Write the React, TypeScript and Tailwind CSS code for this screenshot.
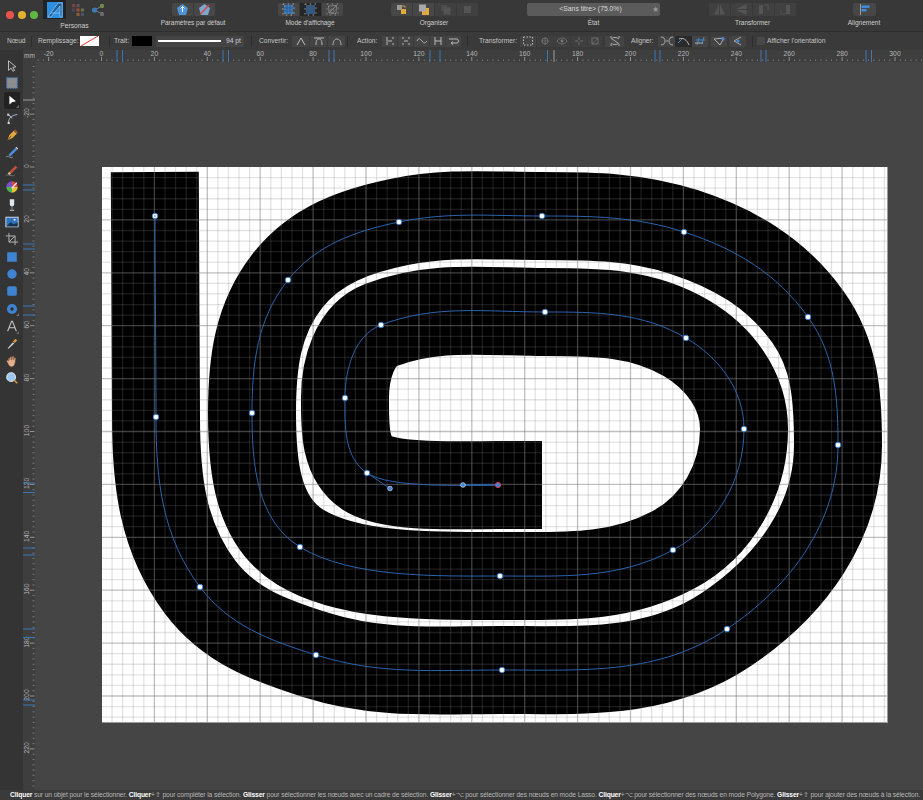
import React from "react";

const font = { fontFamily: '"Liberation Sans", Arial, sans-serif' };

// x, y and the direction of travel at each node of the spiral
const nodes = [
  [155, 216, 0, 1], [156, 417, 0, 1], [200, 587, 0.6, 0.8], [316, 655, 0.95, 0.3], [502, 670, 1, 0],
  [727, 629, 0.83, -0.56], [838, 445, 0, -1], [808, 317, -0.58, -0.81], [684, 232, -0.93, -0.3],
  [542, 216, -1, 0], [399, 222, -0.97, 0.2], [288, 280, -0.62, 0.78], [252, 413, 0, 1],
  [300, 547, 0.85, 0.52], [500, 576, 1, 0], [673, 550, 0.88, -0.47], [744, 429, 0, -1],
  [686, 338, -0.85, -0.5], [545, 312, -1, 0], [381, 325, -0.9, 0.35], [345, 398, 0, 1], [367, 473, 0.83, 0.56],
];

function buildCurve() {
  let d = `M${nodes[0][0]},${nodes[0][1]}`;
  for (let i = 0; i < nodes.length - 1; i++) {
    const [x0, y0, tx0, ty0] = nodes[i];
    const [x1, y1, tx1, ty1] = nodes[i + 1];
    const k = Math.hypot(x1 - x0, y1 - y0) * (i === 13 ? 0.3 : 0.36);
    d += ` C${x0 + tx0 * k},${y0 + ty0 * k} ${x1 - tx1 * k},${y1 - ty1 * k} ${x1},${y1}`;
  }
  return d + " C390,488.5 463,485 498,485";
}

const curve = buildCurve();

const PX_20MM = 52.9;
const ORIGIN_X = 101.5;
const ORIGIN_Y = 167;

function range(from: number, to: number) {
  const out: number[] = [];
  for (let i = from; i <= to; i++) out.push(i);
  return out;
}

function Canvas() {
  const step = PX_20MM / 5;
  return (
    <svg viewBox="35 62 888 728" className="block w-[888px] h-[728px]">
      <rect x="102" y="167" width="786" height="556" fill="#9a9a9a" />
      <rect x="102" y="167" width="785" height="555" fill="#ffffff" />
      <path d={curve} fill="none" stroke="#000" strokeWidth="88" strokeLinecap="square" strokeLinejoin="round" />
      {range(1, 74).map((i) => (
        <line key={i} x1={ORIGIN_X + i * step} x2={ORIGIN_X + i * step} y1="167" y2="722"
          stroke="#808080" strokeOpacity={i % 5 === 0 ? 0.5 : 0.22} strokeWidth="1.3" />
      ))}
      {range(1, 52).map((i) => (
        <line key={i} y1={ORIGIN_Y + i * step} y2={ORIGIN_Y + i * step} x1="102" x2="887"
          stroke="#808080" strokeOpacity={i % 5 === 0 ? 0.5 : 0.22} strokeWidth="1.3" />
      ))}
      <path d={curve} fill="none" stroke="#2c64ad" strokeWidth="1" />
      <path d="M367,473 L390,488.5" fill="none" stroke="#2c64ad" strokeWidth="1" />
      <path d="M463,485 L498,485" fill="none" stroke="#2c64ad" strokeWidth="1.4" />
      {nodes.map(([x, y], i) => (
        <g key={i}>
          <circle cx={x} cy={y} r="2.8" fill="#fff" stroke="#2f74c8" strokeWidth="0.9" />
          {i === 0 && <circle cx={x} cy={y} r="0.8" fill="#2f74c8" />}
        </g>
      ))}
      <circle cx="390" cy="488.5" r="2.3" fill="#3d82d8" stroke="#c8d4e0" strokeWidth="0.8" />
      <circle cx="463" cy="485" r="2.3" fill="#3d82d8" stroke="#c8d4e0" strokeWidth="0.8" />
      <circle cx="498" cy="485" r="2.6" fill="#3d82d8" stroke="#e0384c" strokeWidth="1" />
    </svg>
  );
}

function TopRuler() {
  const marks = [117, 122.5, 223, 228.5, 329, 334, 430, 440, 547.5, 655, 660, 761, 766, 866, 871.5];
  return (
    <svg viewBox="35 50 888 12" className="block w-[888px] h-[12px]" style={font}>
      {range(-25, 155).map((i) => {
        const x = ORIGIN_X + (i * PX_20MM) / 10;
        return <line key={i} x1={x} x2={x} y1={i % 10 === 0 ? 57 : 59.5} y2="61" stroke="#a8a8a8" strokeWidth="0.8" strokeOpacity={i % 10 === 0 ? 1 : 0.7} />;
      })}
      {range(-1, 15).map((i) => (
        <text key={i} x={ORIGIN_X + i * PX_20MM} y="56" fontSize="6.8" fill="#b4b4b4" textAnchor="middle">{i * 20}</text>
      ))}
      {marks.map((x) => (
        <line key={x} x1={x} x2={x} y1="50" y2="62" stroke="#3b77b4" strokeWidth="1" />
      ))}
      <line x1="554" x2="554" y1="50" y2="62" stroke="#9a9a9a" strokeWidth="1" />
    </svg>
  );
}

function LeftRuler() {
  const marks = [185, 190, 244, 249, 306, 315, 483, 492.5, 548, 555, 629, 637.5, 700, 705];
  return (
    <svg viewBox="23 62 12 728" className="block w-[12px] h-[728px]" style={font}>
      {range(-20, 120).map((i) => {
        const y = ORIGIN_Y + (i * PX_20MM) / 10;
        if (y < 64) return null;
        return <line key={i} y1={y} y2={y} x1={i % 10 === 0 ? 30 : 32.5} x2="34.5" stroke="#a8a8a8" strokeWidth="0.8" strokeOpacity={i % 10 === 0 ? 1 : 0.7} />;
      })}
      {range(-1, 11).map((i) => {
        const y = ORIGIN_Y + i * PX_20MM - 1;
        return (
          <text key={i} transform={`translate(29 ${y}) rotate(-90)`} fontSize="6.8" fill="#b4b4b4" textAnchor="middle">{i * 20}</text>
        );
      })}
      {marks.map((y) => (
        <line key={y} y1={y} y2={y} x1="23" x2="35" stroke="#3b77b4" strokeWidth="1" />
      ))}
      <line y1="100" y2="100" x1="23" x2="35" stroke="#9a9a9a" strokeWidth="1" />
    </svg>
  );
}

function Ic({ w = 16, h = 16, size, children, dim }: { w?: number; h?: number; size?: number; children: React.ReactNode; dim?: boolean }) {
  return (
    <svg viewBox={`0 0 ${w} ${h}`} width={size ?? w} height={size ?? h} className={dim ? "block opacity-40" : "block"}>
      {children}
    </svg>
  );
}

const toolIcons: React.ReactNode[] = [
  <path d="M4 2 L4 13 L7 10.5 L9 14 L11 13 L9 9.5 L12.5 9 Z" fill="#3b3b3b" stroke="#c8c8c8" strokeWidth="1" />,
  <g>
    <rect x="2" y="2" width="12" height="12" fill="#8d8d8d" />
    <rect x="2" y="2" width="12" height="12" fill="none" stroke="#3f7fc4" strokeWidth="1.4" strokeDasharray="1.6 1.2" />
  </g>,
  <path d="M5 3 L5 13 L8 10.5 L12.5 9.5 Z" fill="#fff" />,
  <g fill="none" strokeWidth="1.1">
    <path d="M4 14 C4 8 7 5 14 4" stroke="#9fc0e2" />
    <rect x="3" y="12.5" width="2.4" height="2.4" fill="#d8d8d8" stroke="none" />
    <rect x="2.5" y="3" width="2.4" height="2.4" fill="#cfcfcf" stroke="none" />
    <path d="M4 4 L8 8.5" stroke="#cfcfcf" />
  </g>,
  <g>
    <path d="M3 14 L5 8 L10 3 L13.5 6.5 L8.5 11.5 Z" fill="#e3a73b" />
    <path d="M10 3 L11.5 1.5 L15 5 L13.5 6.5 Z" fill="#8a5a3c" />
    <path d="M3 14 L7 9" stroke="#5a3d12" strokeWidth="0.9" />
  </g>,
  <g>
    <path d="M4 11 L12 3 L14 5 L6 13 Z" fill="#4a8fe0" />
    <path d="M12 3 L13 2 L15 4 L14 5 Z" fill="#d9d9d9" />
    <path d="M1 14 C4 11 6 16 9 14" stroke="#9a9a9a" fill="none" strokeWidth="1" />
  </g>,
  <g>
    <path d="M5 10 L12 3 L14 5 L7 12 Z" fill="#c8503c" />
    <path d="M3 12 L5 10 L7 12 L5 14 Z" fill="#d9b58a" />
    <path d="M1 14.5 C4 12 7 16 11 14" stroke="#777" fill="none" strokeWidth="1" />
  </g>,
  <g>
    <path d="M8 1.5 A6.5 6.5 0 0 1 14.5 8 L8 8 Z" fill="#e0483c" />
    <path d="M14.5 8 A6.5 6.5 0 0 1 8 14.5 L8 8 Z" fill="#e6c23c" />
    <path d="M8 14.5 A6.5 6.5 0 0 1 1.5 8 L8 8 Z" fill="#4bb04f" />
    <path d="M1.5 8 A6.5 6.5 0 0 1 8 1.5 L8 8 Z" fill="#7a50d0" />
    <path d="M7 9 L13 2.5 L14 3.5 L8.5 10 Z" fill="#eee" />
  </g>,
  <g>
    <path d="M5.5 1.5 L10.5 1.5 L10.5 7 C10.5 9 9 9.5 8 9.5 C7 9.5 5.5 9 5.5 7 Z" fill="#dfe6ee" />
    <rect x="7.5" y="9" width="1" height="4.5" fill="#9a9a9a" />
    <rect x="5.5" y="13.5" width="5" height="1.2" fill="#bbb" />
  </g>,
  <g>
    <rect x="0.5" y="2" width="15" height="12" fill="#e0e6ee" />
    <rect x="1.5" y="3" width="13" height="10" fill="#2e73bd" />
    <path d="M1.5 13 L6.5 8 L9.5 10.5 L14.5 8.5 L14.5 13 Z" fill="#18324f" />
    <circle cx="11" cy="5.5" r="1.2" fill="#e8eef4" />
  </g>,
  <g fill="none" stroke="#b5b5b5" strokeWidth="1.1">
    <path d="M4.5 1 L4.5 11.5 L15 11.5" />
    <path d="M1 4.5 L11.5 4.5 L11.5 15" />
    <path d="M4.5 11.5 L11.5 4.5" />
  </g>,
  <rect x="2.5" y="2.5" width="11" height="11" fill="#3f84d2" rx="0.5" />,
  <circle cx="8" cy="8" r="5.4" fill="#3f84d2" />,
  <rect x="2.5" y="2.5" width="11" height="11" fill="#3f84d2" rx="2.2" />,
  <g>
    <circle cx="8" cy="8" r="5.8" fill="#3f84d2" />
    <circle cx="8" cy="8" r="1.9" fill="#2a2a2a" />
  </g>,
  <path d="M3 14 L7.5 2.5 L8.5 2.5 L13 14 M5 10 L11 10" fill="none" stroke="#c6c6c6" strokeWidth="1.2" />,
  <g>
    <path d="M3 14 L9 7 L10.5 8.5 L4 14.5 Z" fill="#cfd6dc" />
    <path d="M9 6 L12 3 L14 5 L11 8 Z" fill="#d89a34" />
  </g>,
  <path d="M4 8 L4 4.5 L5.5 4.5 L5.5 7 L6 3 L7.5 3 L7.7 7 L8.5 2.5 L10 2.5 L9.8 7 L11 4 L12.3 4.5 L11.5 10 C11 13 9.5 14.5 7.5 14.5 C5.5 14.5 4.5 13 3.5 11 L1.8 8 L3 7.2 Z" fill="#e3b08e" stroke="#6a4028" strokeWidth="0.4" />,
  <g>
    <circle cx="7" cy="7" r="5" fill="#9fc7ee" stroke="#dbe6f0" strokeWidth="1.2" />
    <path d="M10.5 10.5 L14 14" stroke="#d89a34" strokeWidth="1.8" />
  </g>,
];

function ToolColumn() {
  return (
    <div className="w-[23px] shrink-0 bg-[#343434] flex flex-col items-center pt-[7px]">
      {toolIcons.map((ic, i) => (
        <div
          key={i}
          className={`relative w-[16px] h-[17.36px] flex items-center justify-center rounded-[2px] ${i === 2 ? "bg-[#222222]" : ""}`}
        >
          <Ic size={14}>{ic}</Ic>
          {[2, 14, 15].includes(i) && (
            <span className="absolute right-px bottom-px w-0 h-0 border-l-[3px] border-b-[3px] border-l-transparent border-b-[#6a6a6a]" />
          )}
        </div>
      ))}
    </div>
  );
}

function TopBtn({ children, active, dim, w = "w-[21px]" }: { children: React.ReactNode; active?: boolean; dim?: boolean; w?: string }) {
  return (
    <div className={`${w} h-[13px] flex items-center justify-center ${active ? "bg-[#262626]" : "bg-[#474747]"} ${dim ? "opacity-60" : ""}`}>
      {children}
    </div>
  );
}

function Group({ className, label, children }: { className: string; label: string; children: React.ReactNode }) {
  return (
    <div className={`${className} flex flex-col items-center pt-[3px]`}>
      <div className="flex gap-px rounded-[2px] overflow-hidden">{children}</div>
      <div className="text-[6.5px] leading-[10px] mt-[2px] text-[#cfcfcf] whitespace-nowrap">{label}</div>
    </div>
  );
}

function TopBar() {
  return (
    <div className="h-[32px] flex bg-[#383838] border-b border-[#2e2e2e] shrink-0" style={font}>
      <div className="w-[43px] flex gap-[4px] pl-[6px] pt-[10.5px] shrink-0">
        <span className="size-[8px] rounded-full bg-[#e8544d]" />
        <span className="size-[8px] rounded-full bg-[#e0b22f]" />
        <span className="size-[8px] rounded-full bg-[#5fb843]" />
      </div>
      <div className="w-[63px] shrink-0 flex flex-col">
        <div className="flex items-start h-[21px]">
          <div className="w-[23px] h-[19px] bg-[#232323] flex items-center justify-center">
            <Ic w={18} h={18}>
              <path d="M1 1 L17 1 L17 17 L1 17 Z" fill="#2e8fe0" />
              <path d="M2 16 L12 2 L16 2 L16 16 L14 16 L14 5 L5 16 Z M5 12 L14 12" fill="#1b5f9f" stroke="#a8d6f8" strokeWidth="0.6" />
            </Ic>
          </div>
          <div className="w-[23px] h-[19px] flex items-center justify-center">
            <Ic w={14} h={14}>
              <g opacity="0.75">
                <rect x="1" y="1" width="3.2" height="3.2" fill="#8c4a44" />
                <rect x="5.4" y="1" width="3.2" height="3.2" fill="#6d5a66" />
                <rect x="5.4" y="5.4" width="3.2" height="3.2" fill="#b0583a" />
                <rect x="9.8" y="5.4" width="3.2" height="3.2" fill="#6f7d4e" />
                <rect x="1" y="5.4" width="3.2" height="3.2" fill="#5a4a6a" />
                <rect x="5.4" y="9.8" width="3.2" height="3.2" fill="#a46a3a" />
                <rect x="9.8" y="9.8" width="3.2" height="3.2" fill="#4f5a78" />
              </g>
            </Ic>
          </div>
          <div className="w-[17px] h-[19px] flex items-center justify-center">
            <Ic w={14} h={14}>
              <path d="M3.5 7 L11 3 M3.5 7 L11 11" stroke="#6c7c8c" strokeWidth="1" />
              <circle cx="3.5" cy="7" r="2.6" fill="#3a7cb8" />
              <circle cx="11" cy="3" r="2.2" fill="#70884e" />
              <circle cx="11" cy="11" r="2.2" fill="#6c6c6c" />
            </Ic>
          </div>
        </div>
        <div className="text-[6.7px] leading-[10px] mt-[1px] text-[#cfcfcf] text-center">Personas</div>
      </div>

      <Group className="ml-[55px] w-[64px] shrink-0" label="Paramètres par défaut">
        <TopBtn>
          <Ic w={13} h={13}>
            <path d="M6.5 1 L12 5 L10 12 L3 12 L1 5 Z" fill="#4d94d6" />
            <path d="M6.5 3.5 L6.5 9 M4.5 5.5 L6.5 3.5 L8.5 5.5" stroke="#fff" strokeWidth="1" fill="none" />
          </Ic>
        </TopBtn>
        <TopBtn>
          <Ic w={13} h={13}>
            <path d="M6.5 1 L12 5 L10 12 L3 12 L1 5 Z" fill="#7ea7d0" />
            <path d="M2.5 11 L11 2" stroke="#d8453e" strokeWidth="1.2" />
          </Ic>
        </TopBtn>
      </Group>

      <Group className="ml-[53px] w-[64px] shrink-0" label="Mode d'affichage">
        <TopBtn>
          <Ic w={13} h={13}>
            <rect x="2" y="2" width="9" height="9" fill="#3f7fc0" />
            <path d="M5 2 V11 M8 2 V11 M2 5 H11 M2 8 H11" stroke="#224a73" strokeWidth="0.6" />
            <rect x="1" y="1" width="11" height="11" fill="none" stroke="#c4c4c4" strokeWidth="0.8" strokeDasharray="1.4 3.4" />
          </Ic>
        </TopBtn>
        <TopBtn active>
          <Ic w={13} h={13}>
            <rect x="2" y="2" width="9" height="9" fill="#35597e" />
            <rect x="1" y="1" width="11" height="11" fill="none" stroke="#c4c4c4" strokeWidth="0.8" strokeDasharray="1.4 3.4" />
          </Ic>
        </TopBtn>
        <TopBtn>
          <Ic w={13} h={13}>
            <path d="M2.5 3 L10.5 2.5 L10 10.5 L3 10 Z M3 10 L10.5 2.5 M6 6 A2 2 0 1 0 6.1 6" fill="none" stroke="#8e8e8e" strokeWidth="0.8" />
            <rect x="1" y="1" width="11" height="11" fill="none" stroke="#999" strokeWidth="0.8" strokeDasharray="1.4 3.4" />
          </Ic>
        </TopBtn>
      </Group>

      <Group className="ml-[49px] w-[86px] shrink-0" label="Organiser">
        <TopBtn>
          <Ic w={13} h={13}>
            <rect x="2" y="2" width="5" height="5" fill="#9a9a9a" />
            <rect x="6" y="6" width="5" height="5" fill="#e3a93c" />
            <path d="M7 3 H10 V5" stroke="#e3a93c" fill="none" strokeWidth="0.8" />
          </Ic>
        </TopBtn>
        <TopBtn>
          <Ic w={13} h={13}>
            <rect x="5" y="5" width="7" height="7" fill="#e3a93c" />
            <rect x="2" y="1.5" width="7" height="7" fill="#a8a8a8" />
          </Ic>
        </TopBtn>
        <TopBtn dim>
          <Ic w={13} h={13} dim>
            <rect x="2" y="2" width="6" height="6" fill="#777" />
            <rect x="4.5" y="4.5" width="7" height="7" fill="#9a9a9a" />
          </Ic>
        </TopBtn>
        <TopBtn dim>
          <Ic w={13} h={13} dim>
            <rect x="3" y="3" width="7" height="7" fill="#9a9a9a" />
          </Ic>
        </TopBtn>
      </Group>

      <Group className="ml-[50px] w-[133px] shrink-0" label="État">
        <div className="w-[133px] h-[13px] bg-[#5b5b5b] flex items-center relative text-[6.8px] text-[#d8d8d8]">
          <span className="w-[127px] text-center">&lt;Sans titre&gt; (75.0%)</span>
          <span className="absolute right-[1.5px] top-[1px] text-[8px] leading-[11px] text-[#9a9a9a]">★</span>
        </div>
      </Group>

      <Group className="ml-[50px] w-[85px] shrink-0" label="Transformer">
        <TopBtn dim>
          <Ic w={13} h={13} dim><path d="M6 1.5 L6 11.5 L1 11.5 Z M7 1.5 L7 11.5 L12 11.5 Z" fill="#9a9a9a" /></Ic>
        </TopBtn>
        <TopBtn dim>
          <Ic w={13} h={13} dim><path d="M1.5 6 L11.5 6 L11.5 1 Z M1.5 7 L11.5 7 L11.5 12 Z" fill="#9a9a9a" /></Ic>
        </TopBtn>
        <TopBtn dim>
          <Ic w={13} h={13} dim><path d="M2 2 H6 V11 H2 Z" fill="#9a9a9a" /><path d="M7 2 H11 V7" fill="none" stroke="#9a9a9a" /></Ic>
        </TopBtn>
        <TopBtn dim>
          <Ic w={13} h={13} dim><path d="M7 2 H11 V11 H7 Z" fill="#9a9a9a" /><path d="M6 11 H2 V7" fill="none" stroke="#9a9a9a" /></Ic>
        </TopBtn>
      </Group>

      <div className="ml-[53px] w-[32px] shrink-0 flex flex-col items-center pt-[3px]">
        <div className="w-[23px] h-[13px] bg-[#474747] flex items-center justify-center rounded-[2px]">
          <Ic w={13} h={13}>
            <rect x="2" y="1" width="1" height="11" fill="#9a9a9a" />
            <rect x="3.5" y="2.5" width="8" height="2.4" fill="#3f8ee0" />
            <rect x="3.5" y="6" width="5" height="2.4" fill="#3f8ee0" />
          </Ic>
        </div>
        <div className="text-[6.5px] leading-[10px] mt-[2px] text-[#cfcfcf] whitespace-nowrap">Alignement</div>
      </div>
    </div>
  );
}

function CtxBtn({ children, active, dim, w = "w-[16px]" }: { children: React.ReactNode; active?: boolean; dim?: boolean; w?: string }) {
  return (
    <div className={`${w} h-[11px] flex items-center justify-center ${active ? "bg-[#2a2a2a]" : "bg-[#444444]"} ${dim ? "opacity-50" : ""}`}>
      {children}
    </div>
  );
}

const Stroke = "#b8b8b8";

function ContextBar() {
  return (
    <div className="h-[18px] flex items-center bg-[#3a3a3a] shrink-0 text-[6.7px] text-[#c4c4c4] whitespace-nowrap" style={font}>
      <span className="ml-[7px] w-[19px]">Nœud</span>
      <span className="ml-[5px] w-px h-[11px] bg-[#2d2d2d]" />
      <span className="ml-[6px] w-[42px]">Remplissage:</span>
      <div className="w-[19px] h-[10px] bg-white flex items-center justify-center shrink-0">
        <Ic w={19} h={10}><path d="M1 10 L18 0" stroke="#e0352b" strokeWidth="1" /></Ic>
      </div>
      <span className="ml-[10px] w-px h-[11px] bg-[#2d2d2d]" />
      <span className="ml-[4px] w-[18px]">Trait:</span>
      <div className="w-[20px] h-[10px] bg-black shrink-0" />
      <div className="ml-[4px] w-[88px] h-[11px] bg-[#444444] rounded-[1px] flex items-center shrink-0">
        <span className="ml-[2px] w-[63px] h-[2px] bg-white" />
        <span className="ml-[5px] text-[#d0d0d0]">94 pt</span>
      </div>
      <span className="ml-[7px] w-px h-[11px] bg-[#2d2d2d]" />
      <span className="ml-[7px] w-[33px]">Convertir:</span>
      <div className="flex gap-px rounded-[1px] overflow-hidden">
        <CtxBtn w="w-[17px]"><Ic w={12} h={10}><path d="M2 9 L6 2 L10 9" fill="none" stroke={Stroke} /></Ic></CtxBtn>
        <CtxBtn w="w-[17px]"><Ic w={12} h={10}><path d="M1 2 H11 M3 9 C3 3 5 3 6 3 C7 3 9 3 9 9" fill="none" stroke={Stroke} /></Ic></CtxBtn>
        <CtxBtn w="w-[17px]"><Ic w={12} h={10}><path d="M2 9 C2 1 10 1 10 9" fill="none" stroke={Stroke} /></Ic></CtxBtn>
      </div>
      <span className="ml-[2px] w-px h-[11px] bg-[#2d2d2d]" />
      <span className="ml-[9px] w-[25px]">Action:</span>
      <div className="flex gap-px rounded-[1px] overflow-hidden">
        <CtxBtn w="w-[15px]"><Ic w={12} h={10}><path d="M3 1 V9 M9 1 V3 M9 7 V9 M4 5 H8" fill="none" stroke={Stroke} /></Ic></CtxBtn>
        <CtxBtn w="w-[15px]"><Ic w={12} h={10}><path d="M3 1 V3 M3 7 V9 M9 1 V3 M9 7 V9 M4 5 H8" fill="none" stroke={Stroke} /></Ic></CtxBtn>
        <CtxBtn w="w-[15px]"><Ic w={12} h={10}><path d="M1 5 C3 1 4 3 6 5 C8 8 9 7 11 5" fill="none" stroke={Stroke} /></Ic></CtxBtn>
        <CtxBtn w="w-[15px]"><Ic w={12} h={10}><path d="M3 1 V9 M9 1 V9 M3 5 H9" fill="none" stroke={Stroke} /></Ic></CtxBtn>
        <CtxBtn w="w-[15px]"><Ic w={12} h={10}><path d="M1 3 H9 C11 3 11 7 9 7 H4 M5 5.5 L3 7 L5 8.5" fill="none" stroke={Stroke} /></Ic></CtxBtn>
      </div>
      <span className="ml-[6px] w-px h-[11px] bg-[#2d2d2d]" />
      <span className="ml-[11px] w-[41px]">Transformer:</span>
      <div className="flex gap-px rounded-[1px] overflow-hidden">
        <CtxBtn w="w-[16px]"><Ic w={12} h={10}><rect x="1.5" y="1" width="9" height="8" fill="none" stroke={Stroke} strokeWidth="1" strokeDasharray="1.5 1.5" /></Ic></CtxBtn>
        <CtxBtn dim w="w-[16px]"><Ic w={12} h={10}><circle cx="6" cy="5" r="3" fill="none" stroke={Stroke} strokeWidth="0.8" /><path d="M6 1 V9 M2 5 H10" stroke={Stroke} strokeWidth="0.6" /></Ic></CtxBtn>
        <CtxBtn dim w="w-[16px]"><Ic w={12} h={10}><path d="M1 5 C4 1 8 1 11 5 C8 9 4 9 1 5 Z" fill="none" stroke={Stroke} strokeWidth="0.8" /><circle cx="6" cy="5" r="1.4" fill={Stroke} /></Ic></CtxBtn>
        <CtxBtn dim w="w-[16px]"><Ic w={12} h={10}><path d="M6 1 V4 M6 6 V9 M2 5 H5 M7 5 H10" stroke={Stroke} strokeWidth="0.8" /></Ic></CtxBtn>
        <CtxBtn dim w="w-[14px]"><Ic w={12} h={10}><rect x="3" y="2" width="6" height="6" fill="none" stroke={Stroke} strokeWidth="0.8" /><path d="M3 8 L9 2" stroke={Stroke} strokeWidth="0.6" /></Ic></CtxBtn>
      </div>
      <div className="ml-[3px] rounded-[1px] overflow-hidden">
        <CtxBtn w="w-[19px]"><Ic w={14} h={10}><path d="M2 1 H4 M10 1 H12 M2 9 H4 M10 9 H12 M3 3 C5 1 9 1 11 3 M3 7 C5 9 9 9 11 7 M4 3 L10 7" fill="none" stroke={Stroke} strokeWidth="0.9" /></Ic></CtxBtn>
      </div>
      <span className="ml-[7px] w-[27px]">Aligner:</span>
      <div className="flex rounded-[1px] overflow-hidden">
        <CtxBtn w="w-[17px]"><Ic w={14} h={10}><path d="M1 1 C4 1 5 3 5 5 C5 7 4 9 1 9 M13 1 C10 1 9 3 9 5 C9 7 10 9 13 9 M6 5 H8" fill="none" stroke={Stroke} strokeWidth="0.9" /></Ic></CtxBtn>
        <CtxBtn active w="w-[17px]"><Ic w={14} h={10}><path d="M2 3 C6 1 10 4 12 9" fill="none" stroke={Stroke} strokeWidth="1" /><path d="M1 7 L5 3" stroke="#3f8ee0" strokeWidth="1" /></Ic></CtxBtn>
        <CtxBtn w="w-[16px]"><Ic w={14} h={10}><path d="M4 9 L6 2 M9 8 L11 1 M3 4 H12" fill="none" stroke="#3f8ee0" strokeWidth="0.9" /><path d="M2 7 H10" stroke={Stroke} strokeWidth="0.9" /></Ic></CtxBtn>
      </div>
      <div className="ml-[3px] rounded-[1px] overflow-hidden">
        <CtxBtn w="w-[16px]"><Ic w={14} h={10}><path d="M2 3 L12 2 L8 9 Z" fill="none" stroke={Stroke} strokeWidth="0.9" /><circle cx="11" cy="3" r="1.5" fill="#3f8ee0" /></Ic></CtxBtn>
      </div>
      <div className="ml-[2px] rounded-[1px] overflow-hidden">
        <CtxBtn w="w-[17px]"><Ic w={14} h={10}><path d="M3 5 L10 1 M3 5 L10 9" fill="none" stroke={Stroke} strokeWidth="0.9" /><circle cx="7" cy="5" r="1.5" fill="#3f8ee0" /></Ic></CtxBtn>
      </div>
      <span className="ml-[6px] w-px h-[11px] bg-[#2d2d2d]" />
      <span className="ml-[4px] w-[8px] h-[8px] bg-[#484848] rounded-[1px]" />
      <span className="ml-[2px]">Afficher l'orientation</span>
    </div>
  );
}

function StatusBar() {
  return (
    <div className="h-[10px] flex items-center pl-[10px] bg-[#3a3a3a] shrink-0 text-[6.7px] leading-[10px] tracking-[-0.11px] text-[#b8b8b8] whitespace-nowrap overflow-hidden" style={font}>
      <span>
        <b className="text-white">Cliquer</b> sur un objet pour le sélectionner. <b className="text-white">Cliquer</b>+⇧ pour compléter la sélection.{" "}
        <b className="text-white">Glisser</b> pour sélectionner les nœuds avec un cadre de sélection. <b className="text-white">Glisser</b>+⌥ pour sélectionner des nœuds en mode Lasso.{" "}
        <b className="text-white">Cliquer</b>+⌥ pour sélectionner des nœuds en mode Polygone. <b className="text-white">Glisser</b>+⇧ pour ajouter des nœuds à la sélection.
      </span>
    </div>
  );
}

export default function App() {
  return (
    <div className="w-[923px] h-[800px] flex flex-col overflow-hidden bg-[#454545]">
      <TopBar />
      <ContextBar />
      <div className="flex flex-1 min-h-0">
        <ToolColumn />
        <div className="flex-1 min-w-0 flex flex-col">
          <div className="h-[12px] flex bg-[#3e3e3e] shrink-0">
            <div className="w-[12px] text-[6.5px] leading-[12px] text-[#bdbdbd] pl-[1px]" style={font}>mm</div>
            <TopRuler />
          </div>
          <div className="flex flex-1 min-h-0">
            <div className="bg-[#3e3e3e] w-[12px] shrink-0">
              <LeftRuler />
            </div>
            <Canvas />
          </div>
        </div>
      </div>
      <StatusBar />
    </div>
  );
}
